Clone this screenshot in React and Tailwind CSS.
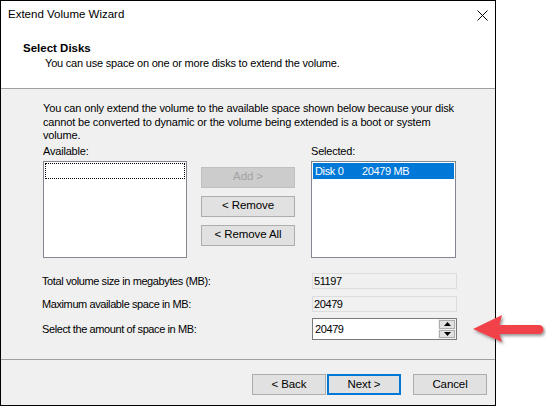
import React from "react";

const font = { fontFamily: '"Liberation Sans", Arial, sans-serif' };

function Btn({ children, disabled, primary, className = "" }) {
  let cls = "flex items-center justify-center h-[21px] text-[11.5px] tracking-[-0.1px] ";
  if (disabled) cls += "bg-[#cccccc] border border-[#bfbfbf] text-[#a3a3a3]";
  else if (primary) cls += "bg-[#e1e1e1] border-2 border-[#0078d7] text-black";
  else cls += "bg-[#e1e1e1] border border-[#adadad] text-black";
  return <div className={cls + " " + className}>{children}</div>;
}

function ReadOnlyField({ value }) {
  return (
    <div className="w-[145px] h-[16px] bg-[#f0f0f0] border border-[#dcdcdc] flex items-center pl-[1px] text-[11px] tracking-[-0.4px] leading-none">
      {value}
    </div>
  );
}

function Arrow() {
  return (
    <svg
      className="absolute left-[466px] top-[306px]"
      width="80"
      height="46"
      viewBox="0 0 80 46"
    >
      <defs>
        <filter id="arrowShadow" x="-20%" y="-30%" width="140%" height="160%">
          <feDropShadow dx="1.5" dy="2" stdDeviation="1.4" floodColor="#404040" floodOpacity="0.55" />
        </filter>
      </defs>
      <path
        d="M7 23 L36 9 L33.5 19 L73 19 A4.5 4.5 0 0 1 73 28 L33.5 28 L36 36 Z"
        fill="#f2434a"
        filter="url(#arrowShadow)"
      />
    </svg>
  );
}

function FieldRow({ label, children, height, className = "" }) {
  return (
    <div className={"flex items-center " + height + " " + className}>
      <span className="w-[270px] -ml-[1px] text-[11px] tracking-[-0.4px]">{label}</span>
      {children}
    </div>
  );
}

export default function App() {
  return (
    <div className="relative w-[546px] h-[406px] bg-white text-black" style={font}>
      <div className="w-[496px] h-[406px] border border-black flex flex-col">
        {/* header */}
        <div className="h-[87px] bg-white border-b border-[#a0a0a0] box-content">
          <div className="h-[28px] flex items-center pl-[7px] pr-[6px]">
            <span className="text-[11.5px]">Extend Volume Wizard</span>
            <svg className="ml-auto mr-[1px]" width="11" height="11" viewBox="0 0 11 11">
              <path d="M0.5 0.5 L10.5 10.5 M10.5 0.5 L0.5 10.5" stroke="#000" strokeWidth="1" />
            </svg>
          </div>
          <div className="pl-[22px] pt-[12px] text-[11.5px] font-bold leading-[14px]">Select Disks</div>
          <div className="pl-[44px] text-[11px] tracking-[-0.2px] leading-[14px] pt-[1px]">
            You can use space on one or more disks to extend the volume.
          </div>
        </div>

        {/* body */}
        <div className="h-[271px] bg-[#f0f0f0] border-b border-[#a0a0a0] pl-[42px] pt-[13px]">
          <p className="whitespace-nowrap leading-[13.5px] text-[11px] tracking-[-0.15px]">
            You can only extend the volume to the available space shown below because your disk
            <br />
            cannot be converted to dynamic or the volume being extended is a boot or system
            <br />
            volume.
          </p>
          <div className="flex mt-[2px] text-[11px] tracking-[-0.2px]">
            <div className="w-[144px]">
              <div className="leading-[13.5px]">Available:</div>
              <div className="mt-[3px] h-[97px] bg-white border border-[#828790] p-[1px]">
                <div className="h-[16px] border border-dotted border-black" />
              </div>
            </div>
            <div className="ml-[14px] mt-[22px] w-[94px] flex flex-col gap-[8px]">
              <Btn disabled>Add &gt;</Btn>
              <Btn>&lt; Remove</Btn>
              <Btn>&lt; Remove All</Btn>
            </div>
            <div className="ml-[16px] w-[145px]">
              <div className="leading-[13.5px]">Selected:</div>
              <div className="mt-[3px] h-[97px] bg-white border border-[#828790] p-[1px]">
                <div className="h-[16px] bg-[#0078d7] text-white flex items-center pl-[2px] tracking-[-0.35px]">
                  <span className="w-[47px]">Disk 0</span>
                  <span>20479 MB</span>
                </div>
              </div>
            </div>
          </div>

          <div className="mt-[15px] flex flex-col">
            <FieldRow label="Total volume size in megabytes (MB):" height="h-[16px]">
              <ReadOnlyField value="51197" />
            </FieldRow>
            <FieldRow label="Maximum available space in MB:" height="h-[16px]" className="mt-[7px]">
              <ReadOnlyField value="20479" />
            </FieldRow>
            <FieldRow label="Select the amount of space in MB:" height="h-[22px]" className="mt-[6px]">
              <div className="w-[145px] h-[22px] bg-white border border-[#7a7a7a] flex">
                <div className="flex-1 flex items-center pl-[2px] leading-none text-[11px] tracking-[-0.4px]">20479</div>
                <div className="w-[18px] flex flex-col p-[1px] gap-[1px] bg-[#f0f0f0]">
                  <div className="flex-1 bg-[#e1e1e1] border border-[#adadad] flex items-center justify-center">
                    <svg width="7" height="4" viewBox="0 0 7 4"><path d="M3.5 0 L7 4 L0 4 Z" fill="#000" /></svg>
                  </div>
                  <div className="flex-1 bg-[#e1e1e1] border border-[#adadad] flex items-center justify-center">
                    <svg width="7" height="4" viewBox="0 0 7 4"><path d="M0 0 L7 0 L3.5 4 Z" fill="#000" /></svg>
                  </div>
                </div>
              </div>
            </FieldRow>
          </div>
        </div>

        {/* footer */}
        <div className="flex-1 bg-[#f0f0f0] flex items-start justify-end pt-[14px] pr-[8px]">
          <Btn className="w-[74px]">&lt; Back</Btn>
          <Btn primary className="w-[74px] ml-[1px]">Next &gt;</Btn>
          <Btn className="w-[74px] ml-[12px]">Cancel</Btn>
        </div>
      </div>
      <Arrow />
    </div>
  );
}
